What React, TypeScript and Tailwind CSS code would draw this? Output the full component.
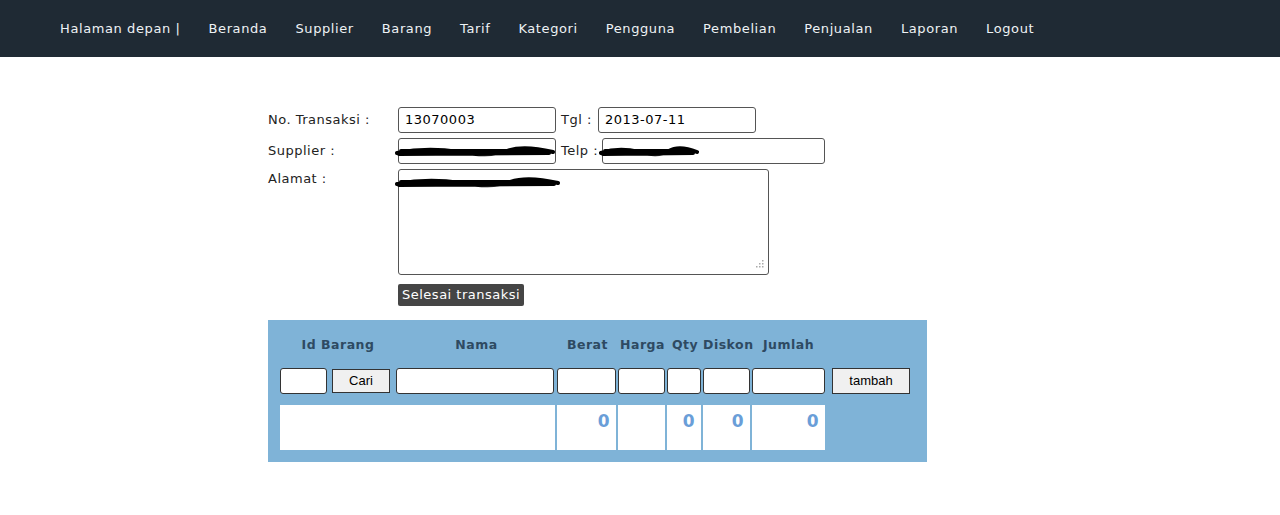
const nav = ['Halaman depan |', 'Beranda', 'Supplier', 'Barang', 'Tarif', 'Kategori', 'Pengguna', 'Pembelian', 'Penjualan', 'Laporan', 'Logout'];

const inp = 'h-[26px] border border-[#555] rounded-[3px] bg-white px-[6px] text-[13px] text-black';
const cell = 'h-[26px] border border-[#333] rounded-[3px] bg-white';

function Scribble({ w }: { w: number }) {
  return (
    <svg width={w} height="14" viewBox={`0 0 ${w} 14`} className="absolute left-[-4px] top-[6px]">
      <path d={`M2 8 Q${w * 0.2} 2 ${w * 0.4} 7 T${w * 0.7} 6 T${w - 2} 7 M4 9 L${w - 6} 8 M6 6 L${w - 10} 6`} stroke="black" strokeWidth="4" fill="none" strokeLinecap="round" />
    </svg>
  );
}

export default function App() {
  return (
    <div className="w-[1280px] h-[515px] bg-white" style={{ fontFamily: '"DejaVu Sans", Verdana, sans-serif' }}>
      <div className="h-[57px] bg-[#1f2a34] flex items-center pl-[60px] gap-[28px] text-[13px] text-[#eef2f5] tracking-[0.6px]">
        {nav.map(n => <span key={n}>{n}</span>)}
      </div>

      <div className="ml-[268px] mt-[50px] text-[13px] text-[#222] tracking-[0.5px]">
        <div className="flex items-center">
          <span className="w-[130px]">No. Transaksi :</span>
          <div className={`${inp} w-[158px] flex items-center`}>13070003</div>
          <span className="ml-[5px] w-[37px]">Tgl :</span>
          <div className={`${inp} w-[158px] flex items-center`}>2013-07-11</div>
        </div>
        <div className="flex items-center mt-[5px]">
          <span className="w-[130px]">Supplier :</span>
          <div className={`${inp} w-[158px] relative`}><Scribble w={160} /></div>
          <span className="ml-[5px] w-[41px]">Telp :</span>
          <div className={`${inp} w-[223px] relative`}><Scribble w={100} /></div>
        </div>
        <div className="flex mt-[5px]">
          <span className="w-[130px]">Alamat :</span>
          <div className="w-[371px] h-[106px] border border-[#555] rounded-[3px] relative">
            <Scribble w={165} />
            <svg width="10" height="10" className="absolute right-[4px] bottom-[4px]" fill="#aaa">
              <rect x="8" y="0" width="1.5" height="1.5" /><rect x="5" y="3" width="1.5" height="1.5" /><rect x="8" y="3" width="1.5" height="1.5" />
              <rect x="2" y="6" width="1.5" height="1.5" /><rect x="5" y="6" width="1.5" height="1.5" /><rect x="8" y="6" width="1.5" height="1.5" />
            </svg>
          </div>
        </div>
        <div className="ml-[130px] mt-[9px] inline-block bg-[#454545] text-white px-[4px] h-[22px] leading-[22px] rounded-[2px]">Selesai transaksi</div>

        <div className="mt-[14px] w-[659px] h-[142px] bg-[#7fb3d7] pl-[12px] pt-[18px]">
          <div className="flex text-[12.5px] font-bold text-[#2e4a62] h-[14px] leading-[14px]">
            <span className="w-[116px] text-center">Id Barang</span>
            <span className="w-[161px] text-center">Nama</span>
            <span className="w-[61px] text-center">Berat</span>
            <span className="w-[49px] text-center">Harga</span>
            <span className="w-[36px] text-center">Qty</span>
            <span className="w-[49px] text-center">Diskon</span>
            <span className="w-[73px] text-center">Jumlah</span>
          </div>
          <div className="flex mt-[16px] items-center" style={{ fontFamily: '"Liberation Sans", Arial, sans-serif' }}>
            <div className={`${cell} w-[47px]`} />
            <div className="ml-[5px] w-[58px] h-[24px] bg-[#f0f0f0] border border-[#333] text-[13px] text-black flex items-center justify-center tracking-normal">Cari</div>
            <div className={`${cell} ml-[6px] w-[158px]`} />
            <div className={`${cell} ml-[3px] w-[59px]`} />
            <div className={`${cell} ml-[2px] w-[47px]`} />
            <div className={`${cell} ml-[2px] w-[34px]`} />
            <div className={`${cell} ml-[2px] w-[47px]`} />
            <div className={`${cell} ml-[2px] w-[73px]`} />
            <div className="ml-[7px] w-[78px] h-[26px] bg-[#f0f0f0] border border-[#333] text-[13px] text-black flex items-center justify-center tracking-normal">tambah</div>
          </div>
          <div className="flex mt-[11px] h-[45px] gap-[2px] text-[17px] font-bold text-[#6a9ed8]">
            <div className="w-[275px] bg-white" />
            <div className="w-[59px] bg-white text-right pr-[6px] pt-[4px]">0</div>
            <div className="w-[47px] bg-white" />
            <div className="w-[34px] bg-white text-right pr-[6px] pt-[4px]">0</div>
            <div className="w-[47px] bg-white text-right pr-[6px] pt-[4px]">0</div>
            <div className="w-[73px] bg-white text-right pr-[6px] pt-[4px]">0</div>
          </div>
        </div>
      </div>
    </div>
  );
}
